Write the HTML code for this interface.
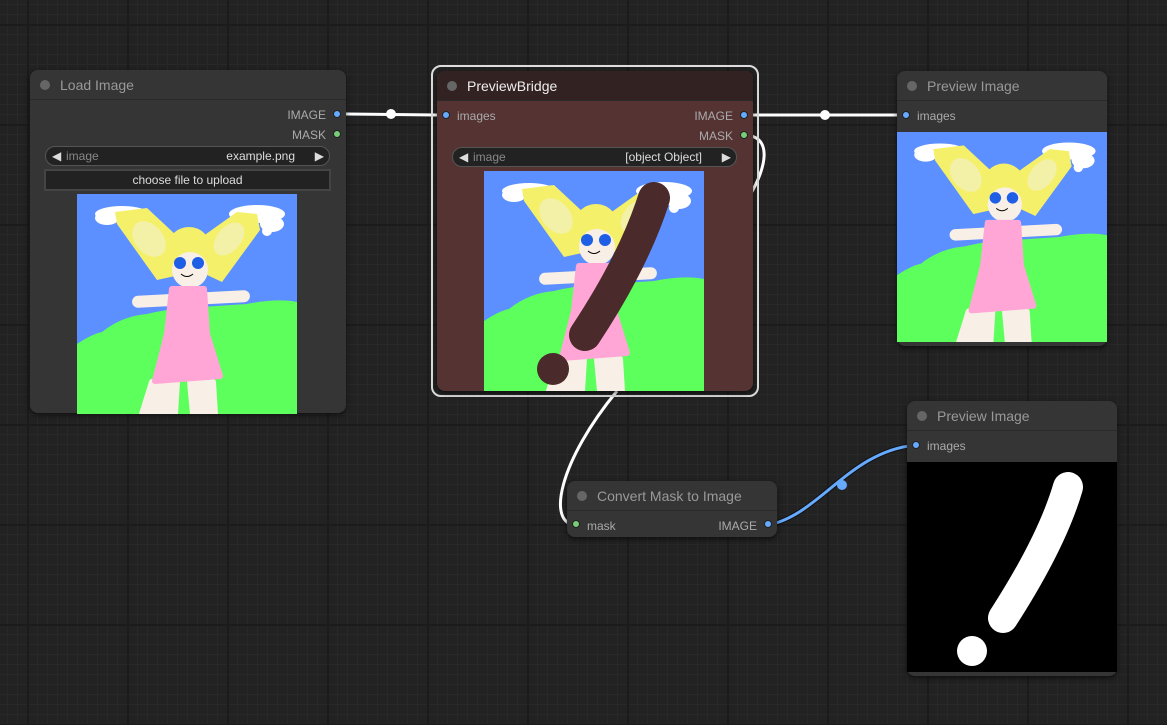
<!DOCTYPE html>
<html><head><style>
*{margin:0;padding:0;box-sizing:border-box}
body{width:1167px;height:725px;overflow:hidden;background:#222;position:relative;font-family:"Liberation Sans",sans-serif;
background-image:linear-gradient(90deg,#1b1b1b 2px,transparent 2px),linear-gradient(#1b1b1b 2px,transparent 2px),linear-gradient(90deg,#282828 1px,transparent 1px),linear-gradient(#282828 1px,transparent 1px);
background-size:100px 100px,100px 100px,10px 10px,10px 10px;background-position:27px 24px,27px 24px,7px 4px,7px 4px}
.node{position:absolute;background:#353535;border-radius:8px;box-shadow:0 2px 6px rgba(0,0,0,.6)}
.title{height:30px;border-bottom:1px solid #2a2a2a;color:#999;font-size:14px;line-height:30px;padding-left:30px;position:relative;border-radius:8px 8px 0 0}
.title:before{content:"";position:absolute;left:10px;top:10px;width:10px;height:10px;border-radius:50%;background:#666}
.lbl{position:absolute;font-size:12px;color:#aaa}
.dot{position:absolute;width:8px;height:8px;border-radius:50%;border:1px solid #222}
.b{background:#6af}.g{background:#7c7}
.combo{position:absolute;height:20px;border-radius:10px;background:#222;border:1px solid #555;font-size:12px;line-height:18px;color:#888}
.abs{position:absolute}
</style></head><body>
<svg width="0" height="0" style="position:absolute"><defs>
<symbol id="pic" viewBox="0 0 220 220">
<rect width="220" height="220" fill="#5c8fff"/>
<path d="M0 150 Q15 140 25 138 Q45 122 70 120 Q90 115 110 114 L170 110 Q200 104 220 108 L220 220 L0 220Z" fill="#5cff5c"/>
<g fill="#fff"><ellipse cx="45" cy="20" rx="27" ry="8"/><ellipse cx="30" cy="24" rx="12" ry="7"/><ellipse cx="180" cy="20" rx="28" ry="9"/><ellipse cx="195" cy="30" rx="12" ry="8"/><circle cx="190" cy="37" r="5"/></g>
<g fill="#f5f06a"><path d="M38 18 L70 14 L100 42 L98 82 L80 86 L40 30Z"/><path d="M180 20 L183 36 L145 88 L128 80 L122 45 L160 18Z"/><circle cx="112" cy="55" r="22"/></g>
<g fill="#f3f0a8"><ellipse cx="72" cy="45" rx="14" ry="20" transform="rotate(-40 72 45)"/><ellipse cx="152" cy="45" rx="12" ry="19" transform="rotate(40 152 45)"/></g>
<circle cx="113" cy="76" r="18" fill="#f8efe6"/>
<circle cx="103" cy="69" r="6" fill="#1e5fe6"/><circle cx="121" cy="69" r="6" fill="#1e5fe6"/>
<path d="M104 80 Q110 85 116 80" stroke="#000" fill="none"/>
<rect x="55" y="99" width="118" height="12" rx="6" fill="#f8efe6" transform="rotate(-3 114 105)"/>
<path d="M75 188 L100 188 L98 220 L65 220Z M113 188 L136 188 L138 220 L116 220Z" fill="#f8efe6" stroke="#f8efe6" stroke-width="6" stroke-linejoin="round"/>
<path d="M95 95 L127 95 L130 140 L143 182 L78 187 L90 140Z" fill="#ffa6d6" stroke="#ffa6d6" stroke-width="6" stroke-linejoin="round"/>
</symbol></defs></svg>

<svg class="abs" style="left:0;top:0" width="1167" height="725">
<path d="M346 114 L437 115" stroke="#fff" stroke-width="3" fill="none"/>
<circle cx="391" cy="114" r="5" fill="#fff"/>
<path d="M743 115 L897 115" stroke="#fff" stroke-width="3"/>
<circle cx="825" cy="115" r="5" fill="#fff"/>
<path d="M743 135 C775 135 765 170 750 195" stroke="#fff" stroke-width="3" fill="none"/>
<path d="M617 391 C560 460 545 525 577 525" stroke="#fff" stroke-width="3" fill="none"/>
<path d="M768 525 C820 515 850 450 917 445" stroke="#111" stroke-width="5" fill="none"/>
<path d="M768 525 C820 515 850 450 917 445" stroke="#6af" stroke-width="3" fill="none"/>
<circle cx="842" cy="485" r="5" fill="#6af"/>
</svg>

<!-- Load Image -->
<div class="node" style="left:30px;top:70px;width:316px;height:343px">
<div class="title">Load Image</div>
<span class="lbl" style="right:20px;top:38px">IMAGE</span><span class="dot b" style="right:5px;top:40px"></span>
<span class="lbl" style="right:20px;top:58px">MASK</span><span class="dot g" style="right:5px;top:60px"></span>
<div class="combo" style="left:15px;top:76px;width:285px"><span class="abs" style="left:6px;color:#ddd">◀</span><span class="abs" style="left:20px">image</span><span class="abs" style="right:34px;color:#ddd">example.png</span><span class="abs" style="right:5px;color:#ddd">▶</span></div>
<div class="abs" style="left:14px;top:99px;width:287px;height:22px;background:#222;border:2px solid #444;color:#ddd;font-size:12px;text-align:center;line-height:18px">choose file to upload</div>
<svg class="abs" style="left:47px;top:124px" width="220" height="220"><use href="#pic"/></svg>
</div>

<!-- PreviewBridge -->
<div class="abs" style="left:431px;top:65px;width:328px;height:332px;border:2px solid #ddd;border-radius:10px"></div>
<div class="node" style="left:437px;top:71px;width:316px;height:320px;background:#533;overflow:hidden">
<div class="title" style="background:#322;color:#eee">PreviewBridge</div>
<span class="dot b" style="left:5px;top:40px"></span><span class="lbl" style="left:20px;top:38px">images</span>
<span class="lbl" style="right:20px;top:38px">IMAGE</span><span class="dot b" style="right:5px;top:40px"></span>
<span class="lbl" style="right:20px;top:58px">MASK</span><span class="dot g" style="right:5px;top:60px"></span>
<div class="combo" style="left:15px;top:76px;width:285px"><span class="abs" style="left:6px;color:#ddd">◀</span><span class="abs" style="left:20px">image</span><span class="abs" style="right:34px;color:#ddd">[object Object]</span><span class="abs" style="right:5px;color:#ddd">▶</span></div>
<svg class="abs" style="left:47px;top:100px" width="220" height="220"><use href="#pic"/>
<path d="M170 27 Q150 90 101 164" stroke="#4a2a2a" stroke-width="32" stroke-linecap="round" fill="none"/><circle cx="69" cy="198" r="16" fill="#4a2a2a"/></svg>
</div>

<!-- Preview Image 1 -->
<div class="node" style="left:897px;top:71px;width:210px;height:275px">
<div class="title">Preview Image</div>
<span class="dot b" style="left:5px;top:40px"></span><span class="lbl" style="left:20px;top:38px">images</span>
<svg class="abs" style="left:0;top:61px" width="210" height="210"><use href="#pic"/></svg>
</div>

<!-- Preview Image 2 -->
<div class="node" style="left:907px;top:401px;width:210px;height:275px">
<div class="title">Preview Image</div>
<span class="dot b" style="left:5px;top:40px"></span><span class="lbl" style="left:20px;top:38px">images</span>
<svg class="abs" style="left:0;top:61px" width="210" height="210"><rect width="210" height="210" fill="#000"/>
<path d="M161 25 Q145 80 96 156" stroke="#fff" stroke-width="30" stroke-linecap="round" fill="none"/><circle cx="65" cy="189" r="15" fill="#fff"/></svg>
</div>

<!-- Convert Mask -->
<div class="node" style="left:567px;top:481px;width:210px;height:56px">
<div class="title">Convert Mask to Image</div>
<span class="dot g" style="left:5px;top:39px"></span><span class="lbl" style="left:20px;top:38px">mask</span>
<span class="lbl" style="right:20px;top:38px">IMAGE</span><span class="dot b" style="right:5px;top:39px"></span>
</div>
</body></html>
